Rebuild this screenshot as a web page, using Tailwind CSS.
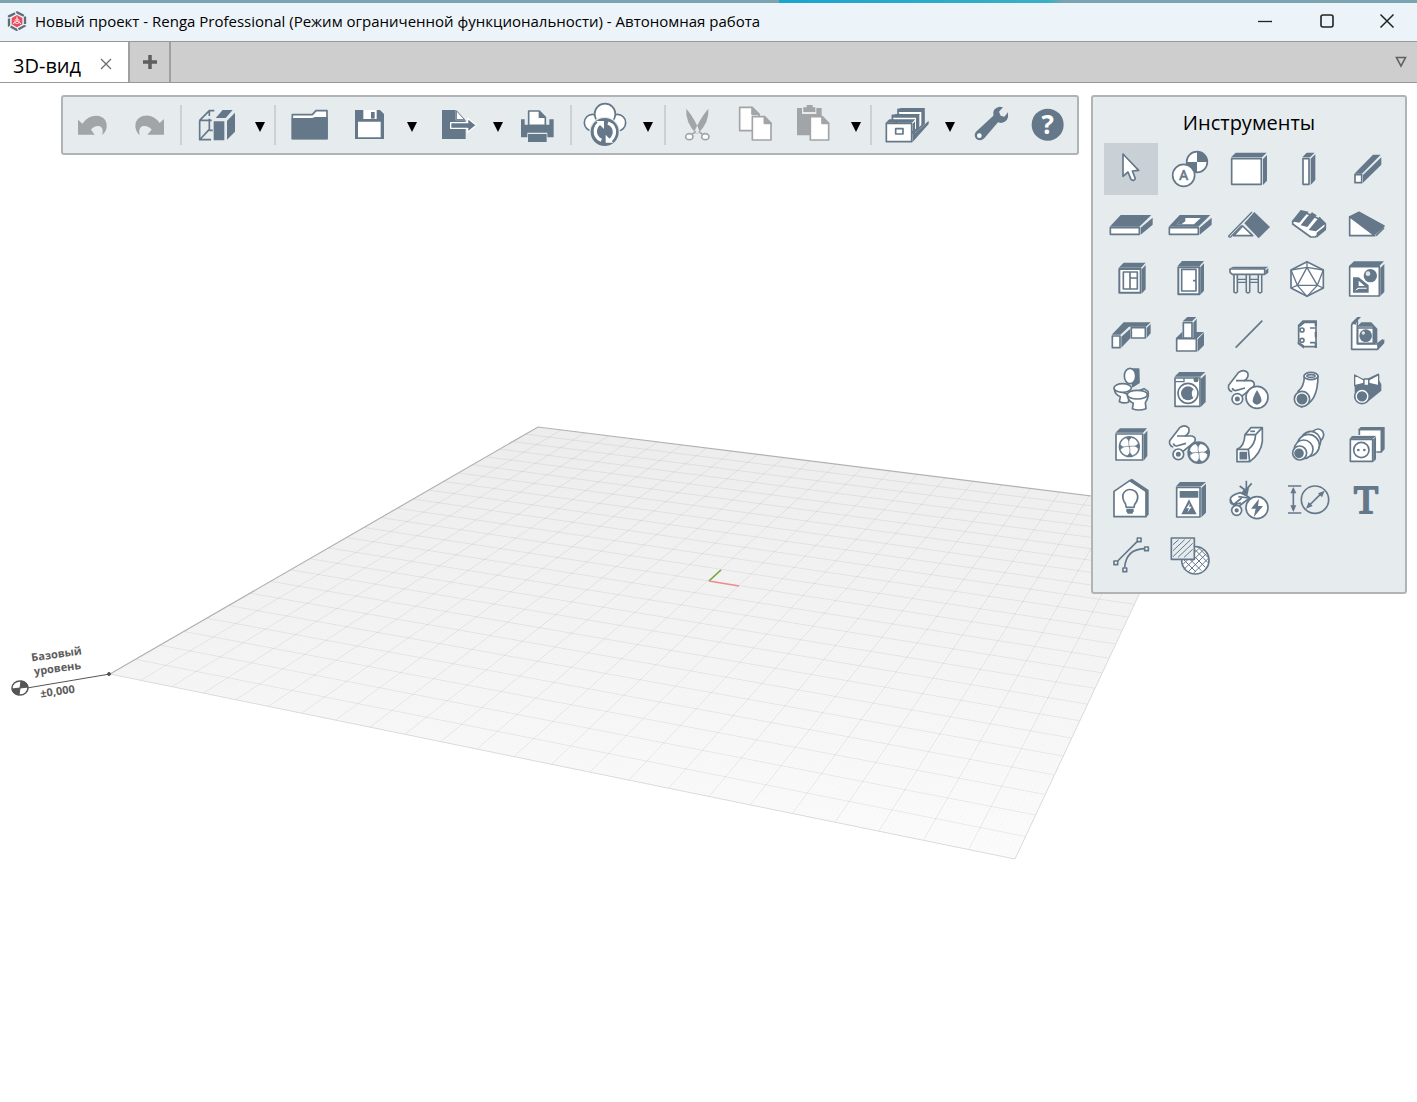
<!DOCTYPE html>
<html lang="ru">
<head>
    <meta charset="UTF-8">
    <meta name="viewport" content="width=device-width, initial-scale=1.0">
    <title>Новый проект - Renga Professional</title>
    <script src="https://cdn.jsdelivr.net/npm/@tailwindcss/browser@4"></script>
</head>
<body class="h-screen flex flex-col bg-white text-black font-['Open_Sans','Noto_Sans',sans-serif] overflow-hidden">

    <!-- Desktop strip above the window -->
    <div class="h-[3px] shrink-0 bg-[linear-gradient(90deg,#7ba3b0_55%,#1ba3cf_55%,#3ab0c4_74%,#7ba3b0_75%)]"></div>

    <!-- Title bar -->
    <header class="h-[38px] shrink-0 flex items-center pl-[7px] pb-0.5 bg-[#ecf4f9]">
        <svg class="size-5" viewBox="0 0 60 60" fill="none" stroke="#5c6f78" stroke-width="7">
            <path d="M30 4L54 16V44L30 57L6 44V16Z" stroke-dasharray="23 4"/>
            <path d="M30 12L46 21V40L30 49L14 40V21Z" fill="#f0485c" stroke="none"/>
            <path d="M30 17V30M30 30L18 38M30 30L42 38" stroke="#fff" stroke-width="3"/>
            <circle cx="30" cy="31" r="7" stroke="#fff" stroke-width="2"/>
        </svg>
        <h1 class="ml-2 text-[15px] leading-5 whitespace-nowrap">Новый проект - Renga Professional (Режим ограниченной функциональности) - Автономная работа</h1>
        <div class="ml-auto flex h-full">
            <button aria-label="Свернуть" class="w-[62px] grid place-items-center"><svg class="size-4" viewBox="0 0 16 16" stroke="#222" stroke-width="1.3"><path d="M1 8.500H15"/></svg></button>
            <button aria-label="Развернуть" class="w-[62px] grid place-items-center"><svg class="size-4" viewBox="0 0 16 16" fill="none" stroke="#222" stroke-width="1.600"><rect x="2" y="2" width="12" height="12" rx="2"/></svg></button>
            <button aria-label="Закрыть" class="w-[58px] mr-px grid place-items-center"><svg class="size-4" viewBox="0 0 16 16" stroke="#222" stroke-width="1.500"><path d="M1.500 1.500L14.500 14.500M14.500 1.500L1.500 14.500"/></svg></button>
        </div>
    </header>

    <!-- Tabs -->
    <nav class="h-[42px] shrink-0 flex bg-[#cecece] border-y border-[#989898]">
        <div class="w-[130px] flex items-center pl-[13px] pt-2 bg-white border-r-2 border-[#a0a0a0]">
            <a href="#" class="text-[20px] leading-7 whitespace-nowrap">3D-вид</a>
            <button aria-label="Закрыть вкладку" class="ml-auto mr-4 mb-1"><svg class="size-3" viewBox="0 0 12 12" stroke="#6c6c6c" stroke-width="1.300"><path d="M1 1L11 11M11 1L1 11"/></svg></button>
        </div>
        <button aria-label="Новая вкладка" class="w-[41px] grid place-items-center border-r-2 border-[#a0a0a0]">
            <svg class="size-4" viewBox="0 0 16 16" stroke="#5e5e5e" stroke-width="3.500"><path d="M8 1V15M1 8H15"/></svg>
        </button>
        <button aria-label="Список вкладок" class="ml-auto mr-2.5 mb-px"><svg class="size-3" viewBox="0 0 12 12" fill="none" stroke="#606060" stroke-width="1.600"><path d="M1.500 1.500H10.500L6 10Z"/></svg></button>
    </nav>

    <main class="flex-1 relative">
        <!-- 3D scene -->
        <svg class="absolute inset-0 w-full h-full" aria-label="3D-вид">
            <defs>
                <linearGradient id="floor" x1="0" y1="0" x2="0" y2="1">
                    <stop offset="0" stop-color="#f0f0f0"/>
                    <stop offset="0.500" stop-color="#f5f5f5"/>
                    <stop offset="1" stop-color="#fcfcfc"/>
                </linearGradient>
            </defs>
            <path d="M538 344L1180 424L1015 776L110 591Z" fill="url(#floor)"/>
            <path id="minor" fill="none" stroke="#000" stroke-opacity="0.020" stroke-width="0.800"/>
            <path id="major" fill="none" stroke="#000" stroke-opacity="0.070" stroke-width="0.900"/>
            <path d="M110 591L1015 776L1180 424" fill="none" stroke="#dadada"/>
            <path d="M110 591L538 344L1180 424" fill="none" stroke="#b2b2b2" stroke-width="1.200"/>
            <path d="M709 498L721 487" stroke="#6aa832" stroke-width="1.500"/>
            <path d="M709 498L739 503" stroke="#ef8c8c" stroke-width="1.500"/>
            <g stroke="#555">
                <path d="M27 605L110 591"/>
                <circle cx="109" cy="591" r="1.500" fill="#555"/>
                <ellipse cx="20" cy="605" rx="8" ry="7" fill="#fff" stroke-width="1.500"/>
                <path d="M20 605L21 598A8 7 0 0 1 28 604ZM20 605L12 606A8 7 0 0 0 19 612Z" fill="#555"/>
            </g>
            <g class="font-bold text-[11px]" fill="#5c5c5c" text-anchor="middle">
                <text transform="translate(57 575) rotate(-8)">Базовый</text>
                <text transform="translate(58 589) rotate(-8)">уровень</text>
                <text transform="translate(58 612) rotate(-8)">±0,000</text>
            </g>
        </svg>

        <div class="relative flex items-start justify-between pt-3 pl-[61px] pr-2.5">
            <div id="toolbar" role="toolbar" class="flex items-center w-[1018px] h-[60px] bg-[#e6ebee] border-2 border-[#b0b4b7] rounded-[3px]"></div>
            <aside class="w-[316px] bg-[#e6ebee] border-2 border-[#b0b4b7] rounded-[3px] px-[9px] pb-[11px]">
                <h2 class="h-11 pt-3 text-center text-[20px] leading-7">Инструменты</h2>
                <div id="tools" class="grid grid-cols-5"></div>
            </aside>
        </div>
    </main>

    <script>
        // currentColor is the dark side of every icon, white is the lit one
        function icon(x, y, art) {
            return `<svg class="size-12" viewBox="${x} ${y} 144 144" fill="#fff" stroke="currentColor" stroke-width="5" stroke-linejoin="round">${art}</svg>`;
        }

        const D = 'fill="currentColor"';
        const S = 'fill="currentColor" stroke="none"';
        const N = 'fill="none"';

        const bar = [
            { name: "Отменить", x: 39, off: true, art: `<path ${S} d="M69 89L82 101Q102 72 133 78Q158 86 155 112Q152 128 141 135Q148 112 132 108Q118 106 108 119L119 134H69Z"/>` },
            { name: "Повторить", x: 213, off: true, art: `<path ${S} d="M327 87L314 99Q294 70 263 78Q240 86 241 110Q244 128 254 135Q249 112 264 108Q280 106 290 119L277 134H327Z"/>` },
            { sep: "ml-px mr-1.5" },
            { name: "Вид", x: 414, arrow: "w-7", art: `<path ${N} d="M434 91V149H468M434 91L463 62H478M434 91H470M463 62V78M463 86V118L436 147M463 121H473"/><path ${S} d="M476 94H508V151H476ZM482 84L503 60H533L512 84ZM516 92L540 68V125L516 149Z"/>` },
            { sep: "mr-1" },
            { name: "Открыть", x: 690, art: `<path d="M712 146V74H772L783 62H816V146Z"/><path ${S} d="M710 84H771L780 81H818V148H710Z"/>` },
            { name: "Сохранить", x: 867, ml: "ml-0.5", arrow: "w-7", art: `<path ${S} d="M897 60H972L984 72V147H897Z"/><path stroke="none" d="M922 60H962V87H922ZM906 95H974V142H906Z"/><path ${S} d="M945 66H956V86H945Z"/>` },
            { name: "Экспорт", x: 102, ml: "ml-1", arrow: "w-5", art: `<path ${S} d="M123 60H164V91H194V147H123Z"/><path stroke-width="3" d="M166 62L191 89H166Z"/><path ${D} stroke="#fff" stroke-width="4" d="M149 98H200V85L226 106L200 127V115H149Z"/>` },
            { name: "Печать", x: 339, art: `<path ${S} d="M363 88H374V104H448V88H461V142H442V128H382V142H363Z"/><path d="M386 106V63H418L436 82V106Z"/><path ${S} d="M416 62L437 84H416ZM384 132H440V156H384Z"/>` },
            { sep: "ml-1 mr-1" },
            { name: "Синхронизация", x: 543, arrow: "w-7", art: `<circle cx="578" cy="98" r="25"/><circle cx="652" cy="98" r="25"/><circle cx="615" cy="72" r="31"/><circle cx="614" cy="126" r="46" fill="#e6ebee" stroke="none"/><circle cx="614" cy="126" r="42" ${S}/><path ${N} stroke="#fff" stroke-width="10" d="M604 151Q584 142 586 120Q588 107 598 100M624 99Q646 108 643 130Q640 144 630 151"/><path stroke="none" d="M588 93H612V117ZM640 158H617V134Z"/>` },
            { sep: "ml-0.5 mr-0.5" },
            { name: "Вырезать", x: 819, off: true, art: `<path ${S} d="M859 56Q884 85 900 127L888 131Q855 95 859 56ZM925 56Q900 85 882 127L894 131Q929 95 925 56Z"/><ellipse cx="868" cy="140" rx="11" ry="9"/><ellipse cx="916" cy="140" rx="11" ry="9"/><path ${N} d="M876 133L888 124M908 133L896 124"/>` },
            { name: "Копировать", x: -30, off: true, art: `<path d="M-4 52H33L54 73V122H-4Z"/><path ${D} d="M33 52L54 73H33Z"/><path d="M34 80H70L90 100V150H34Z"/><path ${D} d="M70 80L90 100H70Z"/>` },
            { name: "Вставить", x: 147, off: true, arrow: "w-7", art: `<path ${S} d="M171 54H186V72H229V54H245V136H171Z"/><path ${S} d="M190 52H200V45H218V52H226V66H190Z"/><path d="M211 80H246L266 100V150H211Z"/><path ${D} d="M246 80L266 100H246Z"/>` },
            { sep: "mr-1.5" },
            { name: "Стили", x: 429, arrow: "w-7", art: `<path d="M474 70V58H551V102L520 130Z"/><path ${S} d="M472 66L482 54H556L546 66Z"/><path d="M457 88V76H532V116L510 130Z"/><path ${S} d="M455 83L466 72H540L530 83ZM544 66L554 58V102L544 112ZM528 84L538 74V116L528 126Z"/><path d="M439 100H515V155H439Z"/><path ${S} d="M437 98L448 88H526L516 98ZM518 102L525 94V130L566 92V102L518 156Z"/><path d="M467 116H489V132H467Z"/>` },
            { name: "Настройки", x: 684, w: "w-14", art: `<path ${S} d="M708 125L760 77Q756 55 778 50L789 52L777 65L782 77L793 80L804 67Q808 96 783 99L774 97L733 145Q722 156 709 147Q700 136 708 125Z"/><circle cx="718" cy="137" r="7" stroke="none"/>` },
            { name: "Справка", x: 852, w: "w-14", art: `<circle cx="923" cy="104" r="48" ${S}/><text x="923" y="132" text-anchor="middle" font-size="78" font-weight="bold" stroke="none">?</text>` }
        ];

        // shared drawings
        const pipes = `<path d="M442 95Q428 92 431 76L461 37Q476 26 488 38Q493 52 478 62H498Q512 66 506 80L466 112"/><path ${N} d="M453 62L480 62M442 84Q444 92 452 92L480 84"/><circle cx="457" cy="117" r="16"/><circle cx="457" cy="117" r="5" ${D}/>`;
        const blade = `M0 0Q-20 6 -27 -6Q-26 -20 -10 -27Q4 -18 0 0Z`;
        const fan = (x, y, r) => `<g transform="translate(${x} ${y})" stroke-width="2"><circle r="${r + 1}" ${S}/><path d="${blade}"/><path d="${blade}" transform="rotate(90)"/><path d="${blade}" transform="rotate(180)"/><path d="${blade}" transform="rotate(270)"/></g>`;

        const tools = [
            // row 1
            ["Выбор", `<path d="M115 192V259L130 246L139 268Q147 275 152 266L143 243L162 241Z"/>`],
            ["Ось и уровень", `<circle cx="337" cy="216" r="31"/><path ${S} d="M337 216V185A31 31 0 0 1 368 216ZM337 216V247A31 31 0 0 1 306 216Z"/><circle cx="297" cy="256" r="33"/><text x="297" y="271" text-anchor="middle" font-size="42" fill="currentColor" stroke-width="2">A</text>`],
            ["Стена", `<path d="M440 206H529V283H440Z"/><path ${S} d="M438 202L452 188H545L531 202ZM534 207L546 195V272L534 285Z"/>`],
            ["Колонна", `<path d="M653 206H671V283H653Z"/><path ${S} d="M651 202L664 188H688L674 202ZM676 206L690 193V270L676 285Z"/>`],
            ["Балка", `<path d="M809 254H829V278H809Z"/><path ${S} d="M807 251L863 194H886L830 251ZM833 255L888 202V224L833 278Z"/>`],
            // row 2
            ["Перекрытие", `<path d="M77 413H164V433H77Z"/><path ${S} d="M75 410L108 375H200L164 410ZM168 413L204 383V404L168 434Z"/>`],
            ["Проём", `<path d="M254 413H341V433H254Z"/><path ${S} d="M252 410L285 375H377L341 410ZM345 413L381 383V404L345 434Z"/><path stroke="none" d="M276 403L296 384H348L328 403Z"/><path ${S} d="M294 384H302V394L290 403H276Z"/>`],
            ["Крыша", `<path d="M446 437L473 408L503 437Z"/><path ${S} d="M508 366L555 411L521 445L478 400Z"/><path ${N} stroke-width="4" d="M501 366L431 438Q432 443 437 441L470 406"/>`],
            ["Лестница", `<path d="M622 394V402L676 441H690L720 414V402L700 386L660 368Z"/><path ${S} d="M619 394L646 360L670 365L642 398ZM646 406L666 380L680 367L694 376L666 411ZM670 420L692 393L703 380L722 400L692 424ZM694 428L722 406V420L694 443Z"/>`],
            ["Пандус", `<path d="M793 380V437H868Z"/><path ${D} d="M794 380L821 367L896 408L868 432Z"/><path ${N} d="M872 437L896 414"/>`],
            // row 3
            ["Окно", `<path stroke-width="6" d="M104 57H168V128H104Z"/><path ${S} d="M102 53L117 38H183L169 53ZM172 57L183 45V118L172 130Z"/><path d="M116 66H158V117H116Z"/><path ${N} d="M136 66V117M136 84H158"/>`],
            ["Дверь", `<path stroke-width="6" d="M281 52H344V133H281Z"/><path ${S} d="M279 48L292 33H358L345 48ZM347 52L358 40V122L347 134Z"/><path d="M291 58H334V123H291Z"/><path ${N} d="M325 92H334"/>`],
            ["Ограждение", `<path d="M447 72H457V126Q452 131 447 126ZM484 72H494V126Q489 131 484 126ZM520 72H530V126Q525 131 520 126Z"/><path ${N} stroke-width="4" d="M457 88H484M457 97H484M494 88H520M494 97H520"/><path d="M435 57H539V73H442L435 67Z"/><path ${S} d="M435 55L444 50H550L541 56ZM541 62L550 54V68L541 75Z"/>`],
            ["Объект", `<path d="M665 35L714 60V114L665 139L617 114V60Z"/><path ${N} stroke-width="4" d="M665 35V52L636 106H696L665 52M617 60L665 52L714 60L696 106L714 114M617 60L636 106L617 114M636 106L665 139L696 106"/>`],
            ["Сборка", `<path d="M793 50H882V138H793Z"/><path ${S} d="M791 48L806 34H896L882 48ZM885 54L897 42V126L885 138Z"/><circle cx="855" cy="77" r="20" ${S}/><circle cx="848" cy="71" r="7" stroke="none" opacity="0.8"/><path ${S} d="M803 82H820L850 106V128H803Z"/><path stroke="none" d="M820 92L838 108H820ZM808 122L818 113H844V116H822Z"/>`],
            // row 4
            ["Элемент трассы", `<path d="M83 258H106V293H83ZM140 233H182V264H140Z"/><path ${S} d="M81 254L117 217H198L184 230H133L107 254ZM110 260L137 236V265L110 293ZM186 234L198 222V250L186 264Z"/>`],
            ["Фундамент", `<path d="M296 218H322V264H296ZM276 266H335V303H276Z"/><path ${S} d="M294 214L308 201H335L322 214ZM326 218L336 206V246H358L338 264H326ZM274 264L293 245V264ZM339 268L358 248V286L339 305Z"/>`],
            ["Линия модели", `<path ${N} d="M452 293L532 212"/>`],
            ["Пластина", `<path d="M692 216V290H656L640 278V228L656 216Z"/><path ${S} d="M652 211H695L690 220H658L643 232L637 226ZM637 276L656 286V296L637 282ZM688 212H695V228H688ZM688 246H695V262H688ZM688 278H695V294H688Z"/><circle cx="650" cy="240" r="6"/><circle cx="650" cy="271" r="6"/><path ${N} d="M674 234H690M674 278H690"/>`],
            ["Деталь", `<path d="M799 224V298H876L892 280V270L876 282H816V212Z"/><path ${S} d="M797 220L816 201H827L812 217V224ZM877 300L897 279V268L875 284Z"/><path d="M817 234H864V280H817Z"/><path ${S} d="M815 230L828 217H858L876 236V278L866 282V236L860 230Z"/><circle cx="841" cy="257" r="19" ${S}/><circle cx="834" cy="249" r="5" stroke="none" opacity="0.8"/>`],
            // row 5
            ["Санитарный прибор", `<path ${D} d="M142 27H162L163 68L144 80Z"/><ellipse cx="136" cy="48" rx="17" ry="23"/><path d="M89 86Q90 104 107 110L104 125Q118 132 132 126V104Z"/><ellipse cx="114" cy="84" rx="26" ry="13"/><path d="M128 106Q130 122 146 130L143 146Q162 154 184 146L182 128Q194 110 190 94L178 86Z"/><ellipse cx="158" cy="104" rx="30" ry="13"/>`],
            ["Оборудование", `<path d="M271 54H346V139H271Z"/><path ${S} d="M269 50L284 36H362L347 50ZM349 56L363 43V126L349 140Z"/><path ${N} stroke-width="4" d="M271 65H298V54"/><circle cx="334" cy="59" r="5" ${D}/><circle cx="310" cy="100" r="30"/><circle cx="310" cy="100" r="21" ${S}/><path stroke="none" d="M326 88Q316 100 326 114L331 106V94Z"/>`],
            ["Трубопровод", `${pipes}<circle cx="516" cy="112" r="33"/><path ${S} d="M516 90Q532 116 529 124Q524 134 516 134Q507 134 503 124Q502 114 516 90Z"/>`],
            ["Труба", `<path d="M657 48Q657 80 638 94L648 141Q698 128 698 48Z"/><ellipse cx="677" cy="48" rx="21" ry="11"/><ellipse cx="677" cy="48" rx="12" ry="4"/><circle cx="650" cy="117" r="23"/><circle cx="650" cy="117" r="14" ${D}/>`],
            ["Арматура трубопровода", `<path ${S} d="M808 50L838 60L880 40V60L888 72V92L842 130L808 96Z"/><path stroke-width="4" d="M808 45L836 60V70L808 77ZM880 44L850 60V70L880 77Z"/><path stroke-width="4" d="M836 57H850V76H836Z"/><circle cx="830" cy="109" r="22"/><circle cx="830" cy="109" r="13" ${D}/>`],
            // row 6
            ["Вентилятор", `<path d="M94 222H174V300H94Z"/><path ${S} d="M92 218L106 205H187L175 218ZM177 224L188 212V288L177 302Z"/>${fan(134, 260, 31)}`],
            ["Вентиляция", `<g transform="translate(-176 166)">${pipes}</g>${fan(342, 278, 33)}`],
            ["Воздуховод", `<path d="M456 268Q478 260 480 224L498 203H532V244Q528 280 494 305H456Z"/><path ${N} d="M480 224H512L532 203M512 224Q510 254 490 268L494 305M456 268H490"/><path ${D} d="M466 278H484V296H466Z"/><path ${N} d="M496 214H510"/>`],
            ["Деталь трубопровода", `<path d="M682 214Q700 200 712 214Q720 228 706 242L690 252Z"/><path d="M652 226Q676 204 698 224Q716 246 694 268L676 284Z"/><circle cx="669" cy="256" r="33"/><circle cx="655" cy="268" r="28"/><circle cx="643" cy="279" r="21"/><circle cx="641" cy="280" r="12" ${D}/>`],
            ["Электроустановка", `<path d="M822 208H888V276H822Z"/><path ${S} d="M818 211L826 201H898V268L888 278V211Z"/><path stroke="#e6ebee" stroke-width="10" d="M793 230H868V304H793Z"/><path d="M795 238H862V304H795Z"/><path ${S} d="M793 236L800 228H872L862 236ZM864 238L872 230V298L864 306Z"/><circle cx="828" cy="270" r="23"/><circle cx="819" cy="270" r="4" ${S}/><circle cx="837" cy="270" r="4" ${S}/>`],
            // row 7
            ["Осветительный прибор", `<path d="M88 140V64L135 32L184 64V140Z"/><path ${S} d="M132 31L142 26L192 60V134L184 141V66Z"/><path d="M125 112Q124 100 118 94Q108 72 124 62Q137 54 152 64Q164 76 156 94Q149 102 148 112Z"/><path ${S} d="M125 117H147V124L143 131H129L125 124Z"/>`],
            ["Электрический щит", `<path d="M276 52H346V141H276Z"/><path ${S} d="M274 49L286 36H364L349 49ZM350 54L364 41V128L350 142ZM285 63H341V83H285ZM313 88L336 133H290Z"/><path stroke="none" d="M316 98L305 115H313L308 128L321 110H313Z"/>`],
            ["Электрическая сеть", `<path d="M436 88Q436 76 466 68L486 78L494 84L462 108Q442 108 436 88Z"/><path ${N} d="M484 32V76M464 48L488 66M500 40L474 70M460 80L492 84M436 88Q434 104 448 102L470 84M444 106L468 98"/><path ${S} d="M478 56L492 54L488 74L468 70Z"/><circle cx="455" cy="121" r="15"/><circle cx="455" cy="121" r="4" ${D}/><circle cx="516" cy="113" r="33"/><path ${S} d="M522 86L498 116H512L506 142L534 108H519Z"/>`],
            ["Размеры", `<path ${N} d="M608 48H648M608 129H648M624 56V120"/><path ${S} d="M624 51L633 70H615ZM624 126L633 106H615Z"/><circle cx="689" cy="89" r="41" ${N}/><path ${N} d="M670 108L708 70"/><path ${S} d="M718 62L710 82L698 70ZM662 116L682 108L670 96Z"/>`],
            ["Текст", `<text x="842" y="129" text-anchor="middle" font-family="Liberation Serif, serif" font-size="118" fill="currentColor" stroke-width="6">T</text>`],
            // row 8
            ["Линия чертежа", `<path ${N} d="M99 273L158 214M120 293Q124 238 179 236"/><path d="M158 204H169V215H158ZM88 273H99V284H88ZM115 294H126V305H115ZM180 231H191V242H180Z"/>`],
            ["Штриховка", `<circle cx="332" cy="271" r="41"/><path ${N} stroke-width="3" d="M296 268L334 306M304 256L350 302M316 246L362 292M328 236L370 278M342 234L372 264M294 284L342 236M298 298L358 238M310 306L368 248M326 310L372 264"/><path fill="#e6ebee" d="M260 204H329V268H260Z"/><path ${N} stroke-width="3" d="M265 224L282 209M265 242L300 209M265 260L318 209M280 262L324 220M298 262L324 238"/>`]
        ];

        document.getElementById("toolbar").innerHTML = bar.map(b => {
            if (b.sep !== undefined) {
                return `<div class="w-0.5 h-10 bg-[#cdd1d4] shrink-0 ${b.sep}"></div>`;
            }
            const main = `<button aria-label="${b.name}" class="${b.w || "w-[58px]"} ${b.ml || ""} ${b.off ? "text-[#a2a5a8]" : "text-[#64788a]"} h-14 shrink-0 grid place-items-center">${icon(b.x, 33, b.art)}</button>`;
            const arrow = b.arrow ? `<button aria-label="${b.name}: ещё" class="${b.arrow} h-14 pt-1 shrink-0 grid place-items-center"><svg class="w-2.5 h-2.5" viewBox="0 0 10 10"><path d="M0 0H10L5 10Z"/></svg></button>` : "";
            return main + arrow;
        }).join("");

        const colX = [67, 244, 420, 596, 773];
        const rowY = [165, 330, 15, 180, 15, 180, 15, 180];
        document.getElementById("tools").innerHTML = tools.map(([name, art], i) => `
            <div class="h-[55px] grid place-items-center">
                <button aria-label="${name}" class="w-[54px] h-[52px] grid place-items-center text-[#64788a] ${i === 0 ? "bg-[#c9d1d6]" : ""}">${icon(colX[i % 5], rowY[Math.floor(i / 5)], art)}</button>
            </div>`).join("");

        // Perspective floor grid: maps the unit square onto the floor corners
        function floorPoint(u, v) {
            const g = 0.57, h = 0.2405;
            const w = 1 + g * u + h * v;
            const x = 1015 + (1180 * (1 + g) - 1015) * u + (110 * (1 + h) - 1015) * v;
            const y = 776 + (424 * (1 + g) - 776) * u + (591 * (1 + h) - 776) * v;
            return (x / w).toFixed(1) + " " + (y / w).toFixed(1);
        }

        function gridPath(n) {
            let d = "";
            for (let i = 1; i < n; i++) {
                const t = i / n;
                d += `M${floorPoint(t, 0)}L${floorPoint(t, 1)}M${floorPoint(0, t)}L${floorPoint(1, t)}`;
            }
            return d;
        }

        document.getElementById("major").setAttribute("d", gridPath(24));
        document.getElementById("minor").setAttribute("d", gridPath(240));
    </script>
</body>
</html>
